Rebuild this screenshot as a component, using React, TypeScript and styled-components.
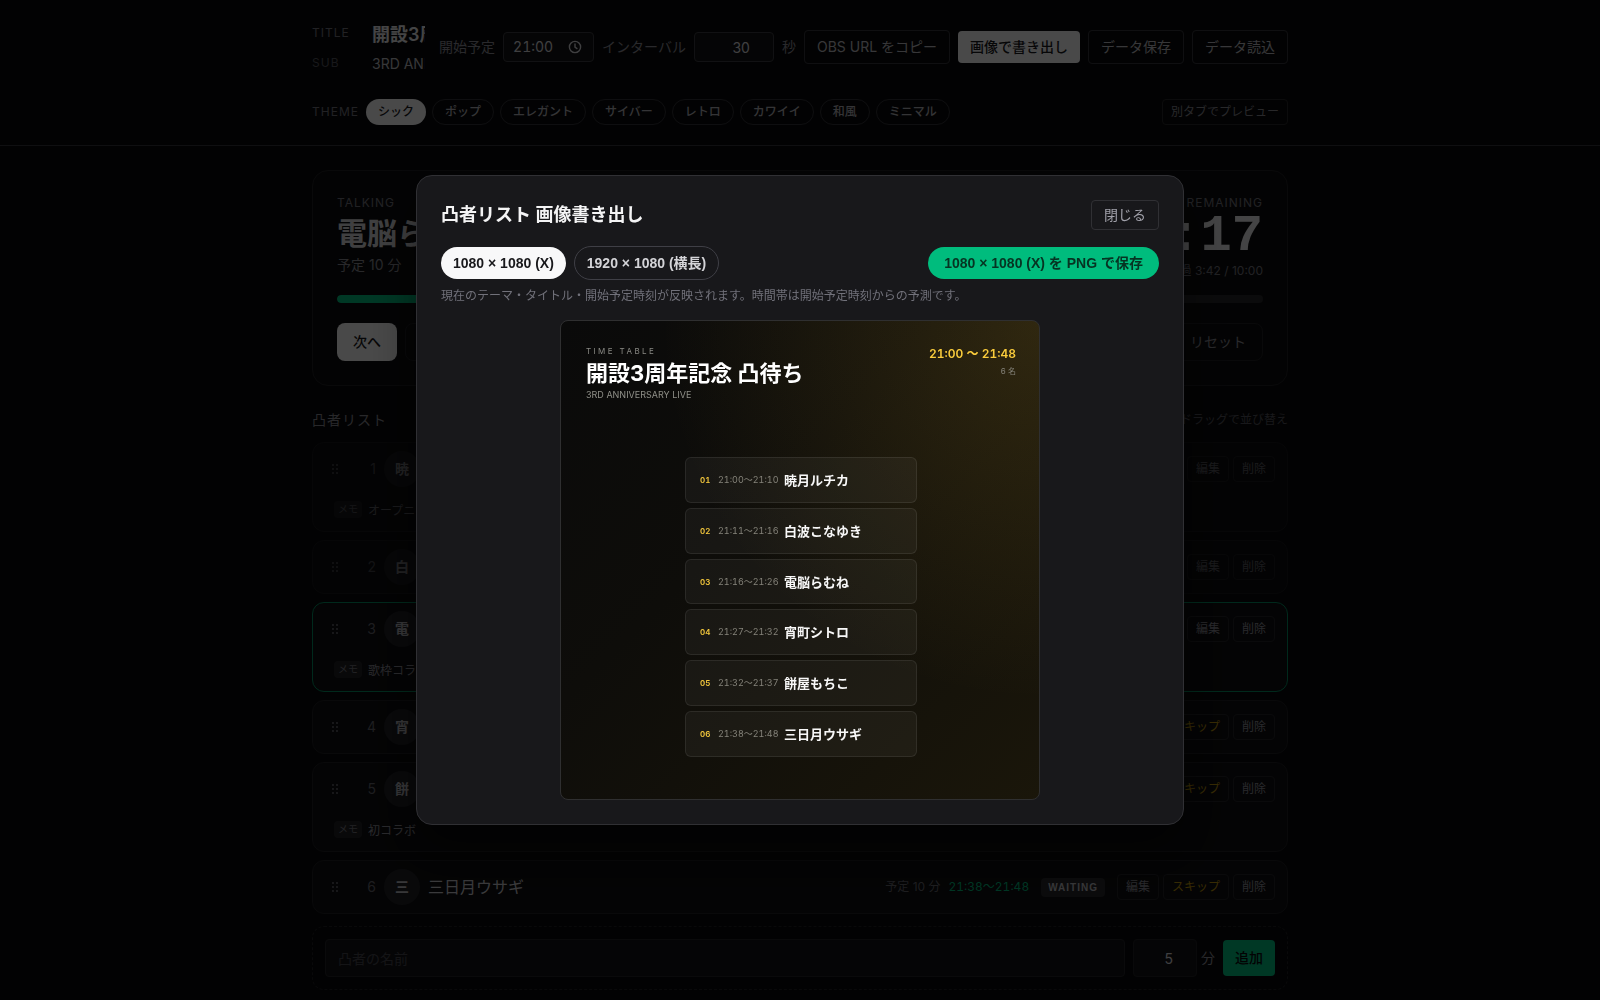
import React from "react";
import styled, { createGlobalStyle, css } from "styled-components";

const GlobalStyle = createGlobalStyle`
  *, *::before, *::after { box-sizing: border-box; }
  html { color-scheme: dark; }
  body {
    margin: 0;
    overflow: hidden;
    background: #09090b;
    color: #f4f4f5;
    font-family: Inter, "Noto Sans CJK JP", "Liberation Sans", sans-serif;
    font-size: 14px;
    line-height: 20px;
  }
  button, input { font: inherit; margin: 0; }
  button { white-space: nowrap; cursor: pointer; }
  h1, h2, p, ol, ul { margin: 0; padding: 0; }
  ol, ul { list-style: none; }
`;

/* ---------- shared ---------- */

const Container = styled.div`
  max-width: 1024px;
  margin: 0 auto;
  padding: 0 24px;
`;

const Spacer = styled.div`
  flex: 1;
`;

const field = css`
  min-width: 0;
  border: 1px solid #3a3a40;
  border-radius: 4px;
  background: #131316;
  color: #d4d4d8;
  outline: none;
`;

const Button = styled.button<{ $solid?: boolean; $muted?: boolean }>`
  flex: none;
  padding: 6px 12px;
  border: ${(p) => (p.$solid ? "0" : "1px solid #34343a")};
  border-radius: 4px;
  background: ${(p) => (p.$solid ? "#f4f4f5" : "transparent")};
  color: ${(p) => (p.$solid ? "#18181b" : p.$muted ? "#8a8a93" : "#b8b8be")};
  font-weight: ${(p) => (p.$solid ? 500 : 400)};
`;

/* ---------- header ---------- */

const Header = styled.header`
  padding: 17px 0 20px;
  border-bottom: 1px solid #34343a;
`;

const HeaderRow = styled.div`
  display: flex;
  align-items: center;
  gap: 8px;
`;

const TitleFields = styled.div`
  flex: 1;
  min-width: 0;
`;

const TitleLabel = styled.label`
  display: flex;
  align-items: center;
  gap: 8px;
`;

const Caption = styled.span<{ $dim?: boolean; $width?: number }>`
  display: block;
  flex: none;
  width: ${(p) => (p.$width ? `${p.$width}px` : "auto")};
  color: ${(p) => (p.$dim ? "#52525b" : "#71717a")};
  font-size: 12px;
  line-height: 16px;
  letter-spacing: 1px;
`;

const BareInput = styled.input<{ $large?: boolean }>`
  flex: 1;
  width: 0;
  min-width: 0;
  height: ${(p) => (p.$large ? "32px" : "28px")};
  padding: 0 6px 0 8px;
  border: 0;
  background: transparent;
  color: ${(p) => (p.$large ? "#e4e4e7" : "#b8b8be")};
  font-size: ${(p) => (p.$large ? "18px" : "14px")};
  font-weight: ${(p) => (p.$large ? 600 : 400)};
  outline: none;
`;

const FieldLabel = styled.label`
  display: flex;
  align-items: center;
  gap: 8px;
  flex: none;
  color: #8a8a93;
`;

const TimeBox = styled.span`
  ${field}
  display: flex;
  align-items: center;
  width: 91px;
  height: 30px;
  padding: 0 11px 0 9px;
`;

const TimeText = styled.input`
  flex: 1;
  width: 0;
  min-width: 0;
  padding: 0;
  border: 0;
  background: transparent;
  color: inherit;
  font-variant-numeric: tabular-nums;
  outline: none;
`;

const NumberInput = styled.input<{ $width: number; $tall?: boolean }>`
  ${field}
  width: ${(p) => p.$width}px;
  height: ${(p) => (p.$tall ? "38px" : "30px")};
  padding: 0 8px;
  border-color: ${(p) => (p.$tall ? "#1f1f23" : "#3a3a40")};
  text-align: right;
`;

const ThemeRow = styled.div`
  display: flex;
  align-items: center;
  gap: 6px;
  margin-top: 22px;
`;

const Chip = styled.button<{ $active?: boolean }>`
  padding: 4px 12px;
  height: 26px;
  border: ${(p) => (p.$active ? "0" : "1px solid #303036")};
  border-radius: 13px;
  background: ${(p) => (p.$active ? "#f4f4f5" : "transparent")};
  color: ${(p) => (p.$active ? "#18181b" : "#b0b0b6")};
  font-size: 12px;
  font-weight: 500;
  line-height: 16px;
`;

const PreviewLink = styled.a`
  padding: 4px 8px;
  border: 1px solid #27272a;
  border-radius: 4px;
  color: #85858e;
  font-size: 12px;
  line-height: 16px;
  text-decoration: none;
`;

/* ---------- now talking ---------- */

const Main = styled.main`
  padding-top: 24px;
`;

const NowCard = styled.section`
  padding: 24px;
  border: 1px solid #1e1e22;
  border-radius: 16px;
  background: #0d0d0f;
`;

const NowTop = styled.div`
  display: flex;
  justify-content: space-between;
  height: 80px;
`;

const NowName = styled.h2`
  margin: 4px 0;
  color: #d4d4d8;
  font-size: 30px;
  font-weight: 600;
  line-height: 36px;
`;

const Muted = styled.p`
  color: #85858e;
`;

const Remaining = styled.div`
  display: flex;
  flex-direction: column;
  align-items: flex-end;
`;

const Timer = styled.div`
  color: #e4e4e7;
  font-family: "Liberation Mono", monospace;
  font-size: 52px;
  font-weight: 700;
  line-height: 52px;
`;

const Elapsed = styled.p`
  color: #71717a;
  font-size: 12px;
  line-height: 16px;
`;

const Track = styled.div`
  height: 8px;
  margin: 20px 0;
  border-radius: 4px;
  overflow: hidden;
  background: #27272a;
`;

const Fill = styled.div`
  height: 100%;
  border-radius: 4px;
  background: #00bc7d;
`;

const NowActions = styled.div`
  display: flex;
  gap: 8px;
`;

const LargeButton = styled(Button)`
  height: 38px;
  padding: 0 16px;
  border-color: #1e1e22;
  border-radius: 8px;
`;

/* ---------- list ---------- */

const ListHead = styled.div`
  display: flex;
  align-items: center;
  justify-content: space-between;
  margin: 24px 0 12px;
`;

const ListTitle = styled.h2`
  color: #85858e;
  font-size: 14px;
  font-weight: 400;
  line-height: 20px;
  letter-spacing: 1px;
`;

const ListHint = styled.span`
  color: #52525b;
  font-size: 12px;
`;

const Rows = styled.ul`
  display: grid;
  gap: 8px;
`;

const Row = styled.li<{ $state: State }>`
  display: grid;
  gap: 8px;
  padding: 8px 12px;
  border: 1px solid ${(p) => (p.$state === "talking" ? "#008a5e" : "#1e1e22")};
  border-radius: 12px;
  background: #0e0e11;
  opacity: ${(p) => (p.$state === "done" ? 0.6 : 1)};
`;

const RowLine = styled.div`
  display: flex;
  align-items: center;
  gap: 8px;
`;

const Handle = styled.svg`
  flex: none;
  width: 20px;
  height: 12px;
  fill: #71717a;
`;

const Index = styled.span`
  width: 23px;
  color: #63636b;
  text-align: right;
`;

const Avatar = styled.span`
  display: grid;
  place-items: center;
  flex: none;
  width: 36px;
  height: 36px;
  border-radius: 50%;
  background: #202024;
  color: #b8b8be;
  font-weight: 700;
`;

const RowName = styled.span`
  flex: 1;
  color: #c4c4ca;
  font-size: 16px;
  line-height: 24px;
`;

const Plan = styled.span`
  color: #63636b;
  font-size: 12px;
`;

const Slot = styled.span`
  color: #00b377;
  font-size: 12px;
  font-variant-numeric: tabular-nums;
`;

const Badge = styled.span`
  margin: 0 4px;
  padding: 2px 7px;
  border-radius: 4px;
  background: #27272a;
  color: #b8b8be;
  font-family: "Liberation Sans", sans-serif;
  font-size: 10px;
  font-weight: 700;
  line-height: 15px;
  letter-spacing: 1px;
`;

const RowActions = styled.div`
  display: flex;
  gap: 4px;
`;

const SmallButton = styled.button<{ $warn?: boolean }>`
  height: 26px;
  padding: 0 8px;
  border: 1px solid #232327;
  border-radius: 4px;
  background: transparent;
  color: ${(p) => (p.$warn ? "#b8900c" : "#8a8a93")};
  font-size: 12px;
  line-height: 16px;
`;

const MemoLabel = styled.label`
  display: flex;
  align-items: center;
  gap: 6px;
  padding-left: 9px;
  height: 28px;
`;

const MemoTag = styled.span`
  padding: 1px 4px;
  border-radius: 4px;
  background: #202024;
  color: #71717a;
  font-size: 10px;
  line-height: 15px;
`;

const MemoInput = styled.input`
  flex: 1;
  height: 28px;
  padding: 0;
  border: 0;
  background: transparent;
  color: #8a8a93;
  font-size: 12px;
  outline: none;
`;

const AddForm = styled.form`
  display: flex;
  align-items: center;
  gap: 8px;
  margin: 12px 0 24px;
  padding: 12px;
  border: 1px dashed #1e1e22;
  border-radius: 12px;
`;

const NameInput = styled.input`
  ${field}
  flex: 1;
  height: 38px;
  padding: 0 12px;
  border-color: #232327;
  &::placeholder { color: #45454c; }
`;

const MinuteLabel = styled.label`
  display: flex;
  align-items: center;
  gap: 4px;
  color: #8a8a93;
`;

const AddButton = styled.button`
  height: 36px;
  padding: 0 12px;
  border: 0;
  border-radius: 4px;
  background: #00bc7d;
  color: #09090b;
  font-weight: 500;
`;

/* ---------- export dialog ---------- */

const Backdrop = styled.div`
  position: fixed;
  inset: 0;
  display: flex;
  align-items: center;
  justify-content: center;
  padding: 16px;
  background: rgba(0, 0, 0, 0.7);
`;

const Dialog = styled.section`
  width: 100%;
  max-width: 768px;
  padding: 24px;
  border: 1px solid #303034;
  border-radius: 16px;
  background: #18181b;
  box-shadow: 0 24px 48px rgba(0, 0, 0, 0.5);
`;

const DialogHead = styled.div`
  display: flex;
  align-items: center;
  justify-content: space-between;
  margin-bottom: 16px;
`;

const DialogTitle = styled.h1`
  font-size: 18px;
  font-weight: 600;
  line-height: 28px;
`;

const CloseButton = styled.button`
  padding: 4px 12px;
  border: 1px solid #303034;
  border-radius: 4px;
  background: transparent;
  color: #a1a1aa;
`;

const Sizes = styled.div`
  display: flex;
  align-items: center;
  gap: 8px;
`;

const Pill = styled.button<{ $kind: "active" | "outline" | "save" }>`
  padding: 6px ${(p) => (p.$kind === "save" ? 16 : 12)}px;
  border: ${(p) => (p.$kind === "outline" ? "1px solid #3f3f46" : "0")};
  border-radius: 17px;
  background: ${(p) =>
    p.$kind === "active" ? "#f8f8f9" : p.$kind === "save" ? "#00bc7d" : "transparent"};
  color: ${(p) => (p.$kind === "active" ? "#18181b" : p.$kind === "save" ? "#063322" : "#d4d4d8")};
  font-family: "Liberation Sans", "Noto Sans CJK JP", sans-serif;
  font-weight: 600;
`;

const Hint = styled.p`
  margin: 8px 0 16px;
  color: #71717a;
  font-size: 12px;
  line-height: 16px;
`;

const Poster = styled.div`
  display: flex;
  flex-direction: column;
  width: 100%;
  max-width: 480px;
  aspect-ratio: 1;
  margin: 0 auto;
  padding: 24px 23px 24px 25px;
  border: 1px solid #2f2f30;
  border-radius: 8px;
  background:
    radial-gradient(circle at 100% 0%, rgba(240, 190, 50, 0.14), rgba(240, 190, 50, 0) 56%),
    linear-gradient(135deg, #0a0a0a 0%, #0e0d0a 40%, #1a160a 100%);
`;

const PosterHead = styled.div`
  display: flex;
  justify-content: space-between;
`;

const PosterKicker = styled.p`
  color: #8a8a85;
  font-size: 8px;
  line-height: 12px;
  letter-spacing: 0.3em;
`;

const PosterTitle = styled.h2`
  color: #ffffff;
  font-size: 22px;
  font-weight: 700;
  line-height: 32px;
`;

const PosterSub = styled.p`
  color: #8f8f88;
  font-size: 9px;
  line-height: 12px;
`;

const PosterMeta = styled.div`
  text-align: right;
`;

const PosterTime = styled.p`
  color: #facc3c;
  font-size: 12px;
  font-weight: 600;
  font-variant-numeric: tabular-nums;
  line-height: 18px;
`;

const PosterCount = styled.p`
  color: #85837a;
  font-size: 8px;
  line-height: 16px;
`;

const PosterBody = styled.div`
  flex: 1;
  display: flex;
  align-items: flex-end;
  justify-content: center;
  padding-bottom: 18px;
`;

const PosterList = styled.ol`
  display: grid;
  grid-auto-rows: 1fr;
  gap: 5px;
  width: 232px;
  height: 300px;
`;

const PosterItem = styled.li`
  display: flex;
  align-items: center;
  gap: 7px;
  padding: 0 14px;
  border: 1px solid rgba(255, 255, 255, 0.08);
  border-radius: 6px;
  background: rgba(255, 255, 255, 0.045);
  font-size: 9px;
  font-variant-numeric: tabular-nums;
`;

const ItemNo = styled.span`
  width: 11px;
  color: #f4c83c;
  font-size: 8px;
  font-weight: 600;
`;

const ItemTime = styled.span`
  width: 59px;
  color: #85837a;
  white-space: nowrap;
`;

const ItemName = styled.span`
  color: #f8f8f8;
  font-size: 13px;
  font-weight: 600;
`;

/* ---------- data ---------- */

type State = "done" | "talking" | "waiting";

type Guest = { name: string; minutes: number; slot: string; state: State; memo?: string };

const themes = ["シック", "ポップ", "エレガント", "サイバー", "レトロ", "カワイイ", "和風", "ミニマル"];

const guests: Guest[] = [
  { name: "暁月ルチカ", minutes: 10, slot: "21:00〜21:10", state: "done", memo: "オープニング" },
  { name: "白波こなゆき", minutes: 5, slot: "21:11〜21:16", state: "done" },
  { name: "電脳らむね", minutes: 10, slot: "21:16〜21:26", state: "talking", memo: "歌枠コラボ" },
  { name: "宵町シトロ", minutes: 5, slot: "21:27〜21:32", state: "waiting" },
  { name: "餅屋もちこ", minutes: 5, slot: "21:32〜21:37", state: "waiting", memo: "初コラボ" },
  { name: "三日月ウサギ", minutes: 10, slot: "21:38〜21:48", state: "waiting" },
];

const dots = [1, 5, 9].flatMap((y) => [8, 12].map((x) => ({ x, y })));

function GuestRow({ guest, index }: { guest: Guest; index: number }) {
  return (
    <Row $state={guest.state}>
      <RowLine>
        <Handle viewBox="0 0 20 12" aria-hidden="true">
          {dots.map((d) => (
            <circle key={`${d.x}-${d.y}`} cx={d.x} cy={d.y + 1} r="0.9" />
          ))}
        </Handle>
        <Index>{index + 1}</Index>
        <Avatar>{guest.name[0]}</Avatar>
        <RowName>{guest.name}</RowName>
        <Plan>予定 {guest.minutes} 分</Plan>
        <Slot>{guest.slot}</Slot>
        <Badge>{guest.state.toUpperCase()}</Badge>
        <RowActions>
          <SmallButton>編集</SmallButton>
          {guest.state === "waiting" && <SmallButton $warn>スキップ</SmallButton>}
          <SmallButton>削除</SmallButton>
        </RowActions>
      </RowLine>
      {guest.memo && (
        <MemoLabel>
          <MemoTag>メモ</MemoTag>
          <MemoInput defaultValue={guest.memo} />
        </MemoLabel>
      )}
    </Row>
  );
}

function ExportDialog() {
  return (
    <Backdrop>
      <Dialog role="dialog" aria-modal="true" aria-labelledby="export-title">
        <DialogHead>
          <DialogTitle id="export-title">凸者リスト 画像書き出し</DialogTitle>
          <CloseButton>閉じる</CloseButton>
        </DialogHead>
        <Sizes>
          <Pill $kind="active">1080 × 1080 (X)</Pill>
          <Pill $kind="outline">1920 × 1080 (横長)</Pill>
          <Spacer />
          <Pill $kind="save">1080 × 1080 (X) を PNG で保存</Pill>
        </Sizes>
        <Hint>現在のテーマ・タイトル・開始予定時刻が反映されます。時間帯は開始予定時刻からの予測です。</Hint>
        <Poster>
          <PosterHead>
            <div>
              <PosterKicker>TIME TABLE</PosterKicker>
              <PosterTitle>開設3周年記念 凸待ち</PosterTitle>
              <PosterSub>3RD ANNIVERSARY LIVE</PosterSub>
            </div>
            <PosterMeta>
              <PosterTime>21:00 〜 21:48</PosterTime>
              <PosterCount>6 名</PosterCount>
            </PosterMeta>
          </PosterHead>
          <PosterBody>
            <PosterList>
              {guests.map((g, i) => (
                <PosterItem key={g.name}>
                  <ItemNo>{String(i + 1).padStart(2, "0")}</ItemNo>
                  <ItemTime>{g.slot}</ItemTime>
                  <ItemName>{g.name}</ItemName>
                </PosterItem>
              ))}
            </PosterList>
          </PosterBody>
        </Poster>
      </Dialog>
    </Backdrop>
  );
}

export default function App() {
  return (
    <>
      <GlobalStyle />
      <Header>
        <Container>
          <HeaderRow>
            <TitleFields>
              <TitleLabel>
                <Caption $width={44}>TITLE</Caption>
                <BareInput $large defaultValue="開設3周年記念 凸待ち" />
              </TitleLabel>
              <TitleLabel>
                <Caption $width={44} $dim>SUB</Caption>
                <BareInput defaultValue="3RD ANNIVERSARY LIVE" />
              </TitleLabel>
            </TitleFields>
            <FieldLabel>
              開始予定
              <TimeBox>
                <TimeText defaultValue="21:00" />
                <svg width="14" height="14" viewBox="0 0 14 14" fill="none" stroke="#d4d4d8" strokeWidth="1.4" aria-hidden="true">
                  <circle cx="7" cy="7" r="5.6" />
                  <path d="M7 3.5V7.2L9.4 8.8" />
                </svg>
              </TimeBox>
            </FieldLabel>
            <FieldLabel>
              インターバル
              <NumberInput $width={80} type="number" defaultValue={30} />
              秒
            </FieldLabel>
            <Button>OBS URL をコピー</Button>
            <Button $solid>画像で書き出し</Button>
            <Button>データ保存</Button>
            <Button>データ読込</Button>
          </HeaderRow>
          <ThemeRow>
            <Caption $width={48}>THEME</Caption>
            {themes.map((t, i) => (
              <Chip key={t} $active={i === 0}>{t}</Chip>
            ))}
            <Spacer />
            <PreviewLink href="#preview">別タブでプレビュー</PreviewLink>
          </ThemeRow>
        </Container>
      </Header>
      <Main>
        <Container>
          <NowCard>
            <NowTop>
              <div>
                <Caption>TALKING</Caption>
                <NowName>電脳らむね</NowName>
                <Muted>予定 10 分</Muted>
              </div>
              <Remaining>
                <Caption>REMAINING</Caption>
                <Timer>6:17</Timer>
                <Elapsed>経過 3:42 / 10:00</Elapsed>
              </Remaining>
            </NowTop>
            <Track>
              <Fill style={{ width: `${(222 / 600) * 100}%` }} />
            </Track>
            <NowActions>
              <LargeButton $solid>次へ</LargeButton>
              <LargeButton>一時停止</LargeButton>
              <Spacer />
              <LargeButton $muted>リセット</LargeButton>
            </NowActions>
          </NowCard>
          <ListHead>
            <ListTitle>凸者リスト</ListTitle>
            <ListHint>ドラッグで並び替え</ListHint>
          </ListHead>
          <Rows>
            {guests.map((g, i) => (
              <GuestRow key={g.name} guest={g} index={i} />
            ))}
          </Rows>
          <AddForm onSubmit={(e) => e.preventDefault()}>
            <NameInput placeholder="凸者の名前" aria-label="凸者の名前" />
            <MinuteLabel>
              <NumberInput $width={64} $tall type="number" defaultValue={5} />
              分
            </MinuteLabel>
            <AddButton>追加</AddButton>
          </AddForm>
        </Container>
      </Main>
      <ExportDialog />
    </>
  );
}
